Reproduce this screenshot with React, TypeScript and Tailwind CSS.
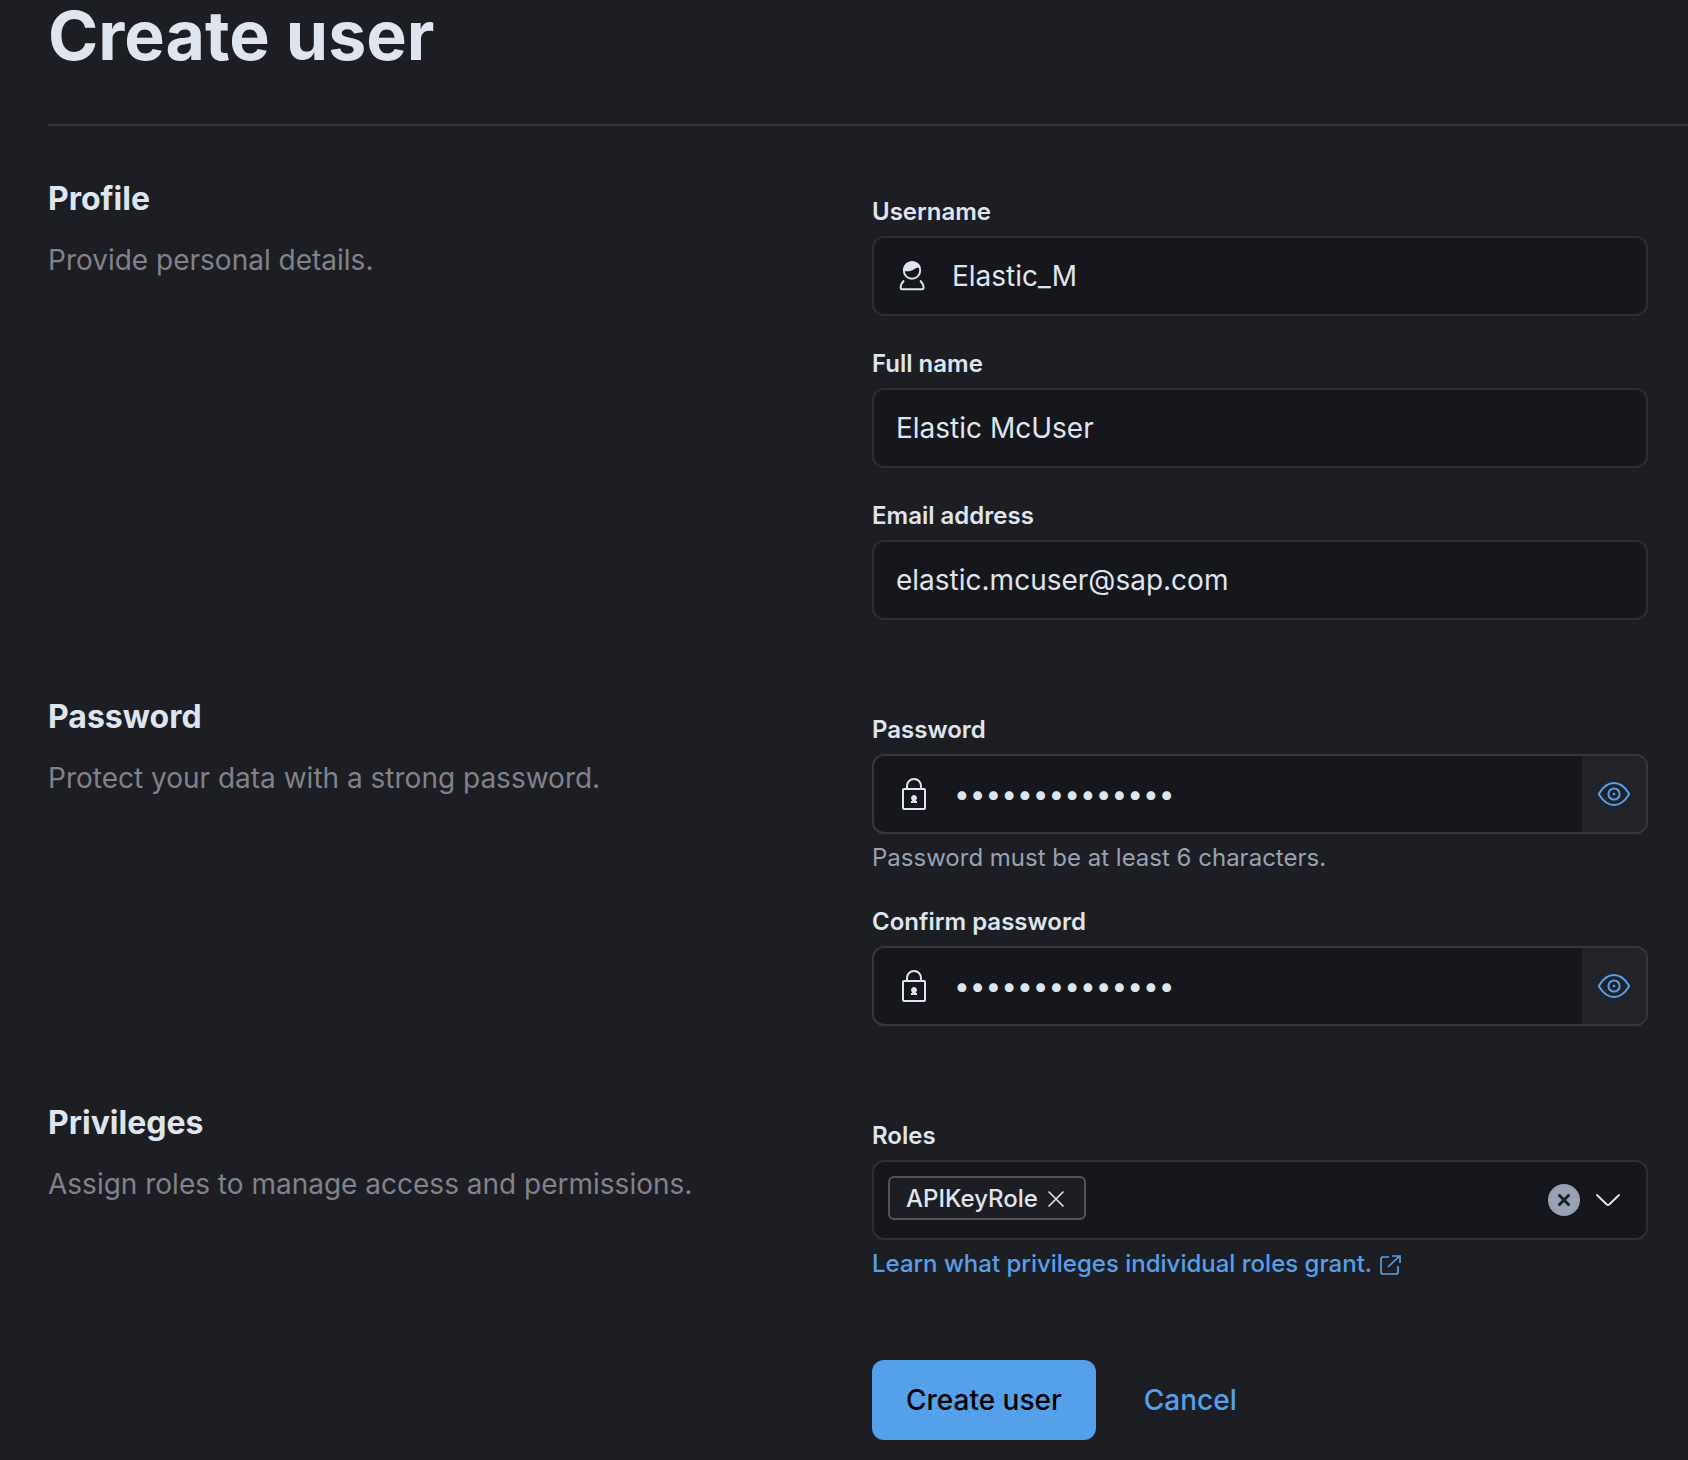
import { useId, useState, type ReactNode } from "react";

const fieldBox =
  "flex h-20 overflow-hidden rounded-xl border-2 border-[#2d2e33] bg-[#16171c] focus-within:border-[#54a0eb]";
const fieldInput =
  "h-full min-w-0 flex-1 bg-transparent text-[28px] text-[#dfe5ef] outline-none";

function UserIcon() {
  return (
    <svg width="32" height="32" viewBox="0 0 32 32" fill="none" aria-hidden="true">
      <circle cx="16" cy="10.500" r="8.200" stroke="#dfe5ef" strokeWidth="1.900" />
      <path d="M7.400 11C7 5 11 1.300 16 1.300c4.600 0 8 2.700 8.800 6.200-3.400-.4-5.300.7-7 1.900-2.200 1.500-5.200 2.200-10.400 1.600z" fill="#dfe5ef" />
      <path
        d="M8 20.500C6 22.500 4.600 25 4.600 28c0 .9.400 1.300 1.300 1.300h20.400c.9 0 1.300-.4 1.300-1.300 0-3-1.500-5.500-3.500-7.500"
        stroke="#dfe5ef"
        strokeWidth="1.900"
      />
    </svg>
  );
}

function LockIcon() {
  return (
    <svg width="32" height="32" viewBox="0 0 32 32" fill="none" aria-hidden="true">
      <rect x="5" y="11" width="22" height="20" rx="1" stroke="#dfe5ef" strokeWidth="2" />
      <path d="M9 11V8a7 7 0 0 1 14 0v3" stroke="#dfe5ef" strokeWidth="2" />
      <path d="M16 17a3 3 0 0 1 2 5.200V23h1v2h-6v-2h1v-.8A3 3 0 0 1 16 17z" fill="#dfe5ef" />
    </svg>
  );
}

function EyeIcon() {
  return (
    <svg width="32" height="32" viewBox="0 0 32 32" fill="none" stroke="#54a0eb" strokeWidth="2" aria-hidden="true">
      <path d="M1.400 17c-.6-.7-.6-1.300 0-2C5.400 8.500 10.400 5 16 5s10.600 3.500 14.600 10c.6.7.6 1.300 0 2-4 6.500-9 10-14.600 10S5.400 23.500 1.400 17z" />
      <circle cx="16" cy="16" r="5.600" />
      <circle cx="16" cy="16" r="1.300" fill="#54a0eb" stroke="none" />
    </svg>
  );
}

function ExternalIcon() {
  return (
    <svg width="24" height="24" viewBox="0 0 24 24" fill="none" stroke="#54a0eb" strokeWidth="1.700" aria-hidden="true">
      <path d="M11 5H5a2 2 0 0 0-2 2v13a2 2 0 0 0 2 2h13a2 2 0 0 0 2-2v-6" />
      <path d="M14 4h8v7M21.500 4.200 10 15" />
    </svg>
  );
}

function Row({ id, label, help, children }: { id: string; label: string; help?: ReactNode; children: ReactNode }) {
  return (
    <div className="flex flex-col gap-2">
      <label htmlFor={id} className="self-start text-2xl font-semibold">
        {label}
      </label>
      {children}
      {help}
    </div>
  );
}

function TextField({ label, initial, icon, type = "text" }: { label: string; initial: string; icon?: ReactNode; type?: string }) {
  const id = useId();
  const [value, setValue] = useState(initial);
  return (
    <Row id={id} label={label}>
      <div className={`${fieldBox} gap-0.5`}>
        {icon && <span className="flex items-center pl-[22px]">{icon}</span>}
        <input
          id={id}
          type={type}
          value={value}
          onChange={(e) => setValue(e.target.value)}
          className={`${fieldInput} px-[22px]`}
        />
      </div>
    </Row>
  );
}

function PasswordField({ label, help }: { label: string; help?: ReactNode }) {
  const id = useId();
  const [value, setValue] = useState("elasticmcuser1");
  const [shown, setShown] = useState(false);
  return (
    <Row id={id} label={label} help={help}>
      <div className="flex h-20 overflow-hidden rounded-xl border-2 border-[#36373c] bg-[#16171c] focus-within:border-[#54a0eb]">
        <span className="flex items-center pl-6">
          <LockIcon />
        </span>
        <input
          id={id}
          type={shown ? "text" : "password"}
          value={value}
          onChange={(e) => setValue(e.target.value)}
          className={`${fieldInput} px-6`}
        />
        <button
          type="button"
          aria-label={shown ? "Hide password" : "Show password"}
          onClick={() => setShown(!shown)}
          className="flex w-16 items-center justify-center bg-[#222328]"
        >
          <EyeIcon />
        </button>
      </div>
    </Row>
  );
}

function RolesField() {
  const id = useId();
  const [roles, setRoles] = useState(["APIKeyRole"]);
  return (
    <Row
      id={id}
      label="Roles"
      help={
        <a href="#roles" className="flex items-center gap-1.5 self-start text-2xl font-medium text-[#54a0eb]">
          Learn what privileges individual roles grant.
          <ExternalIcon />
        </a>
      }
    >
      <div className={fieldBox}>
        <div className="flex min-w-0 flex-1 items-start p-3.5">
          {roles.map((role) => (
            <span
              key={role}
              className="flex h-11 items-center gap-2.5 rounded-md border-2 border-[#535459] bg-[#1d1e24] pt-0.5 pr-5 pl-4 text-2xl font-medium"
            >
              {role}
              <button type="button" aria-label={`Remove ${role}`} onClick={() => setRoles([])}>
                <svg width="16" height="16" viewBox="0 0 16 16" stroke="#dfe5ef" strokeWidth="1.600" strokeLinecap="round" aria-hidden="true">
                  <path d="M1 1l14 14M15 1L1 15" />
                </svg>
              </button>
            </span>
          ))}
          <input id={id} role="combobox" aria-expanded="false" className="h-11 min-w-0 flex-1 bg-transparent px-2 text-2xl outline-none" />
        </div>
        <div className="flex items-center gap-3 pr-[22px]">
          <button type="button" aria-label="Clear roles" onClick={() => setRoles([])}>
            <svg width="32" height="32" viewBox="0 0 32 32" aria-hidden="true">
              <circle cx="16" cy="16" r="16" fill="#98a2b3" />
              <path d="M11.500 11.500l9 9M20.500 11.500l-9 9" stroke="#1d1e24" strokeWidth="3" strokeLinecap="round" />
            </svg>
          </button>
          <button type="button" aria-label="Open role list">
            <svg width="32" height="32" viewBox="0 0 32 32" fill="none" stroke="#dfe5ef" strokeWidth="2" strokeLinecap="round" aria-hidden="true">
              <path d="M5 11l9.800 9.500q1.200 1 2.400 0L27 11" />
            </svg>
          </button>
        </div>
      </div>
    </Row>
  );
}

function Group({ title, text, children }: { title: string; text: string; children: ReactNode }) {
  return (
    <section className="grid grid-cols-2 gap-12">
      <div>
        <h2 className="text-[32px] leading-[50px] font-bold">{title}</h2>
        <p className="mt-4 text-[28px] leading-10 text-[#81828b]">{text}</p>
      </div>
      <div className="flex flex-col gap-8 pt-[22px]">{children}</div>
    </section>
  );
}

export default function App() {
  return (
    <main className="min-h-screen bg-[#1d1e24] pb-5 pl-12 font-['Inter',sans-serif] text-[#dfe5ef]">
      <h1 className="text-[68px] leading-[70px] font-bold">Create user</h1>
      <hr className="mt-[54px] mb-12 border-t-2 border-[#343741]" />
      <form className="flex flex-col gap-[72px] pr-10" onSubmit={(e) => e.preventDefault()}>
        <Group title="Profile" text="Provide personal details.">
          <TextField label="Username" initial="Elastic_M" icon={<UserIcon />} />
          <TextField label="Full name" initial="Elastic McUser" />
          <TextField label="Email address" initial="elastic.mcuser@sap.com" type="email" />
        </Group>
        <Group title="Password" text="Protect your data with a strong password.">
          <PasswordField
            label="Password"
            help={<p className="text-2xl text-[#98a2b3]">Password must be at least 6 characters.</p>}
          />
          <PasswordField label="Confirm password" />
        </Group>
        <Group title="Privileges" text="Assign roles to manage access and permissions.">
          <RolesField />
          <div className="flex gap-4 pt-12">
            <button type="submit" className="h-20 rounded-xl bg-[#54a0eb] px-[34px] text-[28px] font-medium text-black">
              Create user
            </button>
            <button type="button" className="h-20 rounded-xl px-8 text-[28px] font-medium text-[#54a0eb]">
              Cancel
            </button>
          </div>
        </Group>
      </form>
    </main>
  );
}
